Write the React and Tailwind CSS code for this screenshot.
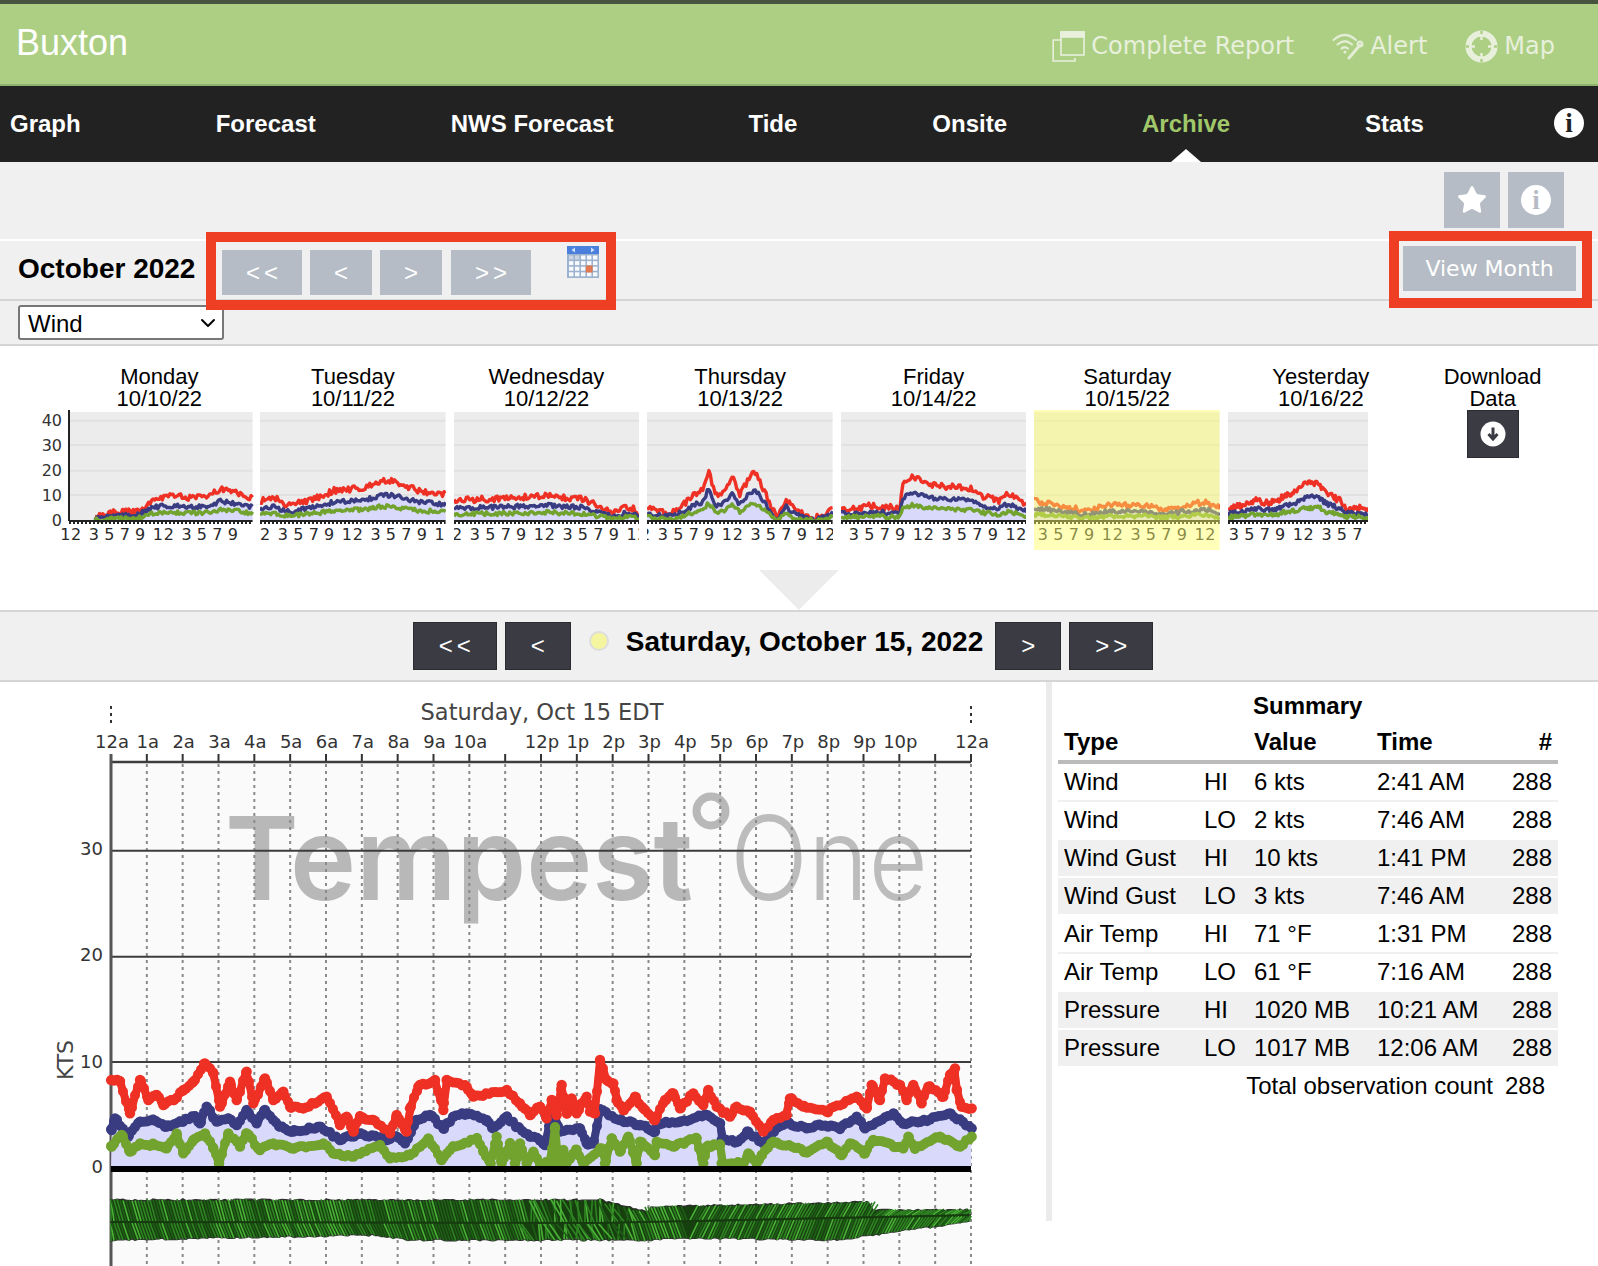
import { ChevronDown, Star } from 'lucide-react';

const NAV = ['Graph', 'Forecast', 'NWS Forecast', 'Tide', 'Onsite', 'Archive', 'Stats'];
const DEJAVU = 'DejaVu Sans, sans-serif';
const COL_WIDTH = 185.6;

const DAYS = [
  { name: 'Monday', date: '10/10/22', offset: 4, left: 2, axis: true, red: [[0.14, 1.7], [0.26, 3.5], [0.38, 4], [0.46, 9], [0.6, 10], [0.68, 9], [0.77, 10], [0.82, 12.5], [0.93, 11], [1, 8.7]] },
  { name: 'Tuesday', date: '10/11/22', offset: 0, red: [[0, 8], [0.08, 9], [0.15, 6], [0.3, 9], [0.4, 12], [0.55, 13], [0.65, 16], [0.72, 16], [0.85, 12], [1, 10.5]] },
  { name: 'Wednesday', date: '10/12/22', offset: -2, red: [[0, 8], [0.1, 8.5], [0.3, 9], [0.5, 10], [0.7, 8.5], [0.8, 5], [0.85, 3], [0.92, 5], [0.97, 5], [1, 1]] },
  { name: 'Thursday', date: '10/13/22', offset: -7, red: [[0, 5], [0.1, 3.5], [0.15, 3.5], [0.25, 10], [0.3, 12], [0.33, 20], [0.37, 10], [0.42, 12], [0.46, 18], [0.5, 10], [0.55, 17], [0.58, 20], [0.63, 12], [0.7, 1], [0.75, 9], [0.8, 4], [0.9, 1], [0.97, 3], [1, 5]] },
  { name: 'Friday', date: '10/14/22', offset: -10, red: [[0, 5], [0.1, 5], [0.15, 6], [0.32, 5], [0.33, 14], [0.38, 18], [0.5, 14], [0.7, 13], [0.75, 10], [0.85, 8], [0.9, 11], [1, 6]] },
  { name: 'Saturday', date: '10/15/22', offset: -14, highlight: true, red: [[0, 8], [0.1, 7], [0.2, 5], [0.3, 4], [0.4, 6.5], [0.5, 6], [0.6, 6], [0.7, 4], [0.8, 6], [0.92, 7.5], [1, 5]] },
  { name: 'Yesterday', date: '10/16/22', offset: -17, width: 140, red: [[0, 5], [0.1, 6], [0.2, 8], [0.3, 7], [0.35, 8], [0.4, 10], [0.5, 12], [0.55, 15], [0.65, 15], [0.7, 11], [0.8, 8], [0.85, 5], [1, 5]] },
];

const HOURS = ['12a', '1a', '2a', '3a', '4a', '5a', '6a', '7a', '8a', '9a', '10a', '', '12p', '1p', '2p', '3p', '4p', '5p', '6p', '7p', '8p', '9p', '10p', '', '12a'];

const SUMMARY = [
  ['Wind', 'HI', '6 kts', '2:41 AM'],
  ['Wind', 'LO', '2 kts', '7:46 AM'],
  ['Wind Gust', 'HI', '10 kts', '1:41 PM'],
  ['Wind Gust', 'LO', '3 kts', '7:46 AM'],
  ['Air Temp', 'HI', '71 °F', '1:31 PM'],
  ['Air Temp', 'LO', '61 °F', '7:16 AM'],
  ['Pressure', 'HI', '1020 MB', '10:21 AM'],
  ['Pressure', 'LO', '1017 MB', '12:06 AM'],
];

// key points read off the big chart, as [x, y] inside two crops of it
const RED = [
  [[215, 240], [240, 245], [270, 340], [300, 240], [325, 300], [350, 285], [370, 315], [400, 300], [430, 270], [460, 245], [495, 190], [520, 220], [540, 320], [570, 245], [590, 300], [620, 215], [640, 310], [675, 235], [700, 300], [730, 275], [750, 320], [790, 325], [860, 290], [900, 375], [920, 350], [940, 395], [960, 350], [1000, 360], [1050, 400], [1070, 345], [1100, 395], [1110, 325], [1135, 260], [1185, 240], [1210, 330], [1220, 240], [1280, 260], [1300, 290], [1400, 270], [1440, 310], [1470, 345]],
  [[0, 320], [20, 355], [35, 300], [50, 345], [65, 255], [80, 340], [95, 295], [110, 340], [140, 290], [150, 335], [165, 340], [180, 180], [200, 240], [220, 250], [230, 300], [250, 330], [285, 290], [310, 325], [345, 360], [375, 300], [400, 280], [420, 325], [460, 280], [490, 315], [505, 270], [530, 320], [570, 350], [590, 320], [630, 335], [670, 395], [700, 360], [740, 345], [750, 295], [790, 320], [860, 335], [950, 290], [980, 325], [995, 255], [1020, 300], [1035, 235], [1080, 255], [1100, 300], [1120, 255], [1145, 310], [1165, 260], [1210, 290], [1230, 225], [1245, 205], [1250, 270], [1265, 320], [1295, 325]],
];
const BLUE = [
  [[215, 390], [225, 355], [265, 410], [300, 365], [340, 360], [380, 380], [420, 365], [465, 350], [480, 370], [500, 320], [530, 365], [565, 355], [590, 375], [620, 330], [650, 370], [675, 330], [720, 380], [760, 395], [840, 380], [900, 420], [960, 400], [1040, 420], [1070, 410], [1095, 430], [1130, 360], [1170, 345], [1210, 385], [1240, 350], [1280, 340], [1340, 360], [1360, 385], [1400, 350], [1430, 380], [1470, 410]],
  [[0, 420], [15, 435], [30, 360], [45, 350], [60, 395], [120, 385], [140, 430], [160, 430], [180, 330], [240, 360], [300, 375], [345, 395], [350, 370], [420, 365], [500, 345], [540, 370], [545, 420], [590, 425], [625, 395], [670, 430], [700, 395], [740, 370], [800, 385], [840, 375], [900, 385], [950, 350], [975, 385], [1060, 340], [1090, 370], [1140, 365], [1230, 340], [1295, 385]],
];
const GREEN = [
  [[215, 440], [245, 405], [270, 455], [300, 430], [340, 435], [380, 445], [410, 400], [430, 460], [460, 420], [495, 400], [520, 445], [537, 490], [565, 400], [600, 440], [620, 400], [660, 450], [700, 430], [760, 445], [850, 430], [880, 460], [940, 470], [1020, 435], [1050, 475], [1110, 465], [1165, 415], [1205, 480], [1240, 440], [1310, 415], [1330, 455], [1352, 490], [1370, 410], [1385, 490], [1410, 430], [1425, 490], [1440, 430], [1460, 490], [1480, 455]],
  [[0, 490], [30, 490], [45, 385], [55, 490], [70, 450], [75, 490], [110, 450], [130, 490], [185, 445], [195, 490], [215, 415], [240, 455], [265, 410], [290, 490], [300, 425], [345, 465], [350, 425], [400, 440], [470, 415], [490, 490], [500, 440], [540, 435], [545, 490], [610, 490], [625, 460], [650, 490], [665, 465], [700, 425], [800, 455], [860, 425], [905, 465], [930, 430], [975, 460], [1000, 420], [1090, 445], [1105, 410], [1125, 445], [1200, 410], [1260, 440], [1295, 410]],
];

function toPage([first, second]) {
  return [
    ...first.map(([x, y]) => [40 + x / 3, 1000 + y / 3]),
    ...second.map(([x, y]) => [540 + x / 3, 1000 + y / 3]),
  ];
}

function wobble(i, seed) {
  const v = Math.sin(i * 12.9898 + seed * 78.233) * 43758.5453;
  return v - Math.floor(v) - 0.5;
}

function lerpAt(points, x) {
  if (x <= points[0][0]) return points[0][1];
  for (let i = 1; i < points.length; i++) {
    if (x <= points[i][0]) {
      const [x0, y0] = points[i - 1];
      const [x1, y1] = points[i];
      return y0 + ((y1 - y0) * (x - x0)) / (x1 - x0 || 1);
    }
  }
  return points[points.length - 1][1];
}

function toLine(points) {
  return points.map(([x, y]) => `${x.toFixed(1)},${y.toFixed(1)}`).join(' ');
}

function Button({ children, className }) {
  return (
    <button type="button" className={`flex items-center justify-center text-white ${className}`}>
      {children}
    </button>
  );
}

function InfoDot({ color, className = '' }) {
  return (
    <span className={`flex h-[30px] w-[30px] items-center justify-center rounded-full bg-white ${className}`}>
      <span className={`font-['Liberation_Serif',serif] text-[27px] leading-none font-bold ${color}`}>i</span>
    </span>
  );
}

function ReportIcon() {
  return (
    <svg width="33" height="31" viewBox="0 0 33 31" fill="none" stroke="#e8f0dc" strokeWidth="1.6">
      <rect x="9" y="1" width="23" height="23" />
      <rect x="9" y="1" width="23" height="5" fill="#e8f0dc" />
      <path d="M9 9H1.2V30H23V27" />
    </svg>
  );
}

function AlertIcon() {
  return (
    <svg width="32" height="28" viewBox="0 0 32 28" fill="none" stroke="#e3ecd4" strokeWidth="2.2" strokeLinecap="round">
      <path d="M1.5 8Q13 -2 24 8" />
      <path d="M5.5 12.5Q13 6 20 12.5" />
      <path d="M9.5 16.5Q13 14 16 16.5" />
      <circle cx="13" cy="20" r="1.6" fill="#e3ecd4" stroke="none" />
      <path d="M28 13L17 26" strokeWidth="3" />
      <circle cx="28" cy="12" r="2.4" />
    </svg>
  );
}

function MapIcon() {
  return (
    <svg width="33" height="33" viewBox="0 0 33 33" fill="none" stroke="#e8f0dc">
      <circle cx="16.5" cy="16.5" r="13" strokeWidth="6" />
      <path d="M16.5 1V4M16.5 29V32M1 16.5H4M29 16.5H32" stroke="#accf84" strokeWidth="2.4" />
      <path d="M16.5 6V10M16.5 23V27M6 16.5H10M23 16.5H27" strokeWidth="2.4" />
    </svg>
  );
}

function CalendarIcon() {
  const cells = [];
  for (let row = 0; row < 4; row++) {
    for (let col = 0; col < 5; col++) {
      cells.push(
        <rect
          key={`${row}-${col}`}
          x={2 + col * 6}
          y={9.5 + row * 5.6}
          width="4.4"
          height="4"
          fill={row === 0 && col < 2 ? '#c9d3e2' : '#f7f9fc'}
        />,
      );
    }
  }
  return (
    <svg width="32" height="32" viewBox="0 0 32 32" className="mt-[5px] ml-[36px]">
      <rect width="32" height="32" fill="#9cb2cf" />
      <rect width="32" height="8" fill="#4a7fdc" />
      <path d="M8 1.5V6.5L4.5 4ZM24 1.5V6.5L27.5 4Z" fill="#cfe0f7" />
      {cells}
      <rect x="18.8" y="19.5" width="6.8" height="7" fill="#e2784f" />
    </svg>
  );
}

function MiniChart({ day }) {
  const width = day.width ?? COL_WIDTH;
  const left = day.left ?? 0;
  const baseY = 111;
  const toY = (v) => baseY - v * 2.53;
  const start = day.red[0][0];
  const red = [];
  const blue = [];
  const green = [];
  const seed = day.date.charCodeAt(4);
  for (let i = 0; i <= 120; i++) {
    const f = i / 120;
    if (f < start) continue;
    const x = left + f * (width - left);
    const v = lerpAt(day.red, f);
    red.push([x, toY(Math.max(0, v + wobble(i, seed) * 2.4))]);
    blue.push([x, toY(Math.max(0, v * 0.64 - 0.2 + wobble(i, seed + 1) * 1.8))]);
    green.push([x, toY(Math.max(0, v * 0.37 - 0.3 + wobble(i, seed + 2) * 1.6))]);
  }
  const area = `${blue[0][0]},${baseY} ${toLine(blue)} ${width},${baseY}`;
  const labels = [0, 3, 5, 7, 9, 12, 15, 17, 19, 21, 24];
  return (
    <svg width={width} height="140" viewBox={`0 0 ${width} 140`} className={day.axis ? 'overflow-visible' : 'overflow-hidden'}>
      <rect x={left} y="2" width={width - left} height={baseY - 2} fill="#ececec" />
      {[10.7, 35, 60.7, 85].map((y) => (
        <line key={y} x1={left} x2={width} y1={y} y2={y} stroke="#e1e1e1" strokeWidth="2" />
      ))}
      <polygon points={area} fill="#d9d9fb" />
      <polyline points={toLine(red)} fill="none" stroke="#ee3124" strokeWidth="3.4" strokeLinejoin="round" />
      <polyline points={toLine(blue)} fill="none" stroke="#3a3c82" strokeWidth="3.4" strokeLinejoin="round" />
      <polyline points={toLine(green)} fill="none" stroke="#72a32e" strokeWidth="3.4" strokeLinejoin="round" />
      <line x1={left} x2={width} y1={baseY} y2={baseY} stroke="#222" strokeWidth="2" />
      <line x1={left} x2={width} y1={baseY + 2} y2={baseY + 2} stroke="#222" strokeWidth="2" strokeDasharray="2 2" />
      {labels.map((hour) => {
        const x = hour * 7.72 + day.offset;
        if (day.axis && x > width) return null;
        return (
          <text key={hour} x={x} y="130" textAnchor="middle" fontFamily={DEJAVU} fontSize="16" letterSpacing="0.6" fill="#2a2a2a">
            {hour % 12 === 0 ? '12' : hour % 12}
          </text>
        );
      })}
      {day.axis && (
        <g fontFamily={DEJAVU} fontSize="16" fill="#333" textAnchor="end">
          <line x1="2" x2="2" y1="0" y2={baseY} stroke="#222" strokeWidth="2" />
          {[[40, 16], [30, 41], [20, 66], [10, 91], [0, 116]].map(([v, y]) => (
            <text key={v} x="-5" y={y}>{v}</text>
          ))}
        </g>
      )}
      {day.highlight && <rect width={width} height="140" fill="#ffff66" fillOpacity="0.45" />}
    </svg>
  );
}

function DayColumn({ day }) {
  return (
    <div className="flex w-[185.6px] shrink-0 flex-col">
      <div className="text-center text-[22px] leading-[22px] text-black">
        <div>{day.name}</div>
        <div>{day.date}</div>
      </div>
      <MiniChart day={day} />
    </div>
  );
}

function DownloadColumn() {
  return (
    <div className="flex w-[142px] shrink-0 flex-col items-center text-center text-[22px] leading-[22px] text-black">
      <div>Download</div>
      <div>Data</div>
      <Button className="h-[48px] w-[52px] border border-[#2b2c32] bg-[#3a3b43]">
        <svg width="26" height="26" viewBox="0 0 26 26">
          <circle cx="13" cy="13" r="12.5" fill="#fff" />
          <path d="M13 6.5V17M8.5 13L13 18L17.5 13" fill="none" stroke="#3a3b43" strokeWidth="3" />
        </svg>
      </Button>
    </div>
  );
}

function Beads({ points, color, seed }) {
  const dots = [];
  for (let x = 111; x <= 971; x += 3) {
    dots.push([x, lerpAt(points, x) + wobble(x, seed) * 3]);
  }
  return (
    <g fill={color}>
      <polyline points={toLine(points)} fill="none" stroke={color} strokeWidth="7" strokeLinejoin="round" />
      <polyline points={toLine(dots)} fill="none" stroke={color} strokeWidth="8" strokeLinejoin="round" />
      {dots.map(([x, y]) => (
        <circle key={x} cx={x} cy={y} r="5" />
      ))}
      {points.map(([x, y]) => (
        <circle key={`${x}-${y}`} cx={x} cy={y} r="5.2" />
      ))}
    </g>
  );
}

function WindBarbs() {
  const top = [[111, 1200], [600, 1200], [648, 1212], [650, 1207], [868, 1202], [873, 1210], [971, 1210]];
  const bottom = [[111, 1240], [373, 1235], [407, 1240], [656, 1240], [673, 1238], [840, 1240], [907, 1230], [971, 1222]];
  const mid = [[111, 1222], [600, 1223], [971, 1215]];
  const strokes = [];
  const edge = [];
  for (let x = 111; x <= 971; x += 3) {
    const m = lerpAt(mid, x);
    const pick = wobble(x, 9);
    const color = pick > 0.3 ? '#4ab236' : pick > -0.15 ? '#2f8423' : '#1f5f17';
    const chaos = x > 530 && x < 640 ? wobble(x, 5) * 16 : 0;
    const slant = x < 690 ? -6 : 8;
    const t = lerpAt(top, x) + wobble(x, 3) * 2;
    const b = lerpAt(bottom, x) + wobble(x, 4) * 2;
    edge.push([x, t], [x, b]);
    strokes.push(
      <line key={`t${x}`} x1={Math.min(971, Math.max(111, x + slant + chaos))} y1={t} x2={x} y2={m - 1} stroke={color} strokeWidth="1.6" />,
      <line key={`b${x}`} x1={Math.min(971, Math.max(111, x + slant - chaos))} y1={m + 1} x2={x} y2={b} stroke={color} strokeWidth="1.6" />,
    );
  }
  const outline = [...edge.filter((_, i) => i % 2 === 0), ...edge.filter((_, i) => i % 2 === 1).reverse()];
  return (
    <g>
      <polygon points={toLine(outline)} fill="#17400f" stroke="#2c2c2c" strokeWidth="1.2" />
      {strokes}
      <polyline points={toLine(mid)} fill="none" stroke="#173a10" strokeWidth="1.5" />
    </g>
  );
}

function MainChart() {
  const step = 860 / 24;
  const baseY = 1169;
  const red = toPage(RED);
  const blue = toPage(BLUE);
  const green = toPage(GREEN);
  return (
    <svg width="1046" height="584" viewBox="0 682 1046 584" className="shrink-0">
      <rect x="111" y="762" width="860" height="504" fill="#fafafa" />
      <text x="225" y="900" fontFamily="Inter, sans-serif" fontWeight="600" fontSize="116" fill="#b8b8b8" textLength="468" lengthAdjust="spacingAndGlyphs">
        Tempest
      </text>
      <circle cx="711" cy="811" r="14.5" fill="none" stroke="#b8b8b8" strokeWidth="8" />
      <text x="730" y="900" fontFamily="Inter, sans-serif" fontWeight="300" fontSize="116" fill="#bcbcbc" textLength="198" lengthAdjust="spacingAndGlyphs">
        One
      </text>

      {HOURS.map((label, i) => (
        <g key={i}>
          <line x1={111 + i * step} x2={111 + i * step} y1="754" y2="762" stroke="#333" strokeWidth="2" />
          {i > 0 && (
            <line x1={111 + i * step} x2={111 + i * step} y1="764" y2="1266" stroke="#8a8a8a" strokeWidth="2" strokeDasharray="3 4" />
          )}
          <text x={112 + i * step} y="748" textAnchor="middle" fontFamily={DEJAVU} fontSize="18" fill="#333">
            {label}
          </text>
        </g>
      ))}
      <line x1="111" x2="111" y1="706" y2="726" stroke="#333" strokeWidth="2" strokeDasharray="3 4" />
      <line x1="971" x2="971" y1="706" y2="726" stroke="#333" strokeWidth="2" strokeDasharray="3 4" />
      <text x="542" y="720" textAnchor="middle" fontFamily={DEJAVU} fontSize="22.5" fill="#444">
        Saturday, Oct 15 EDT
      </text>

      <line x1="111" x2="971" y1="762" y2="762" stroke="#3c3c3c" strokeWidth="2.5" />
      {[850.7, 956.7, 1062].map((y) => (
        <line key={y} x1="111" x2="971" y1={y} y2={y} stroke="#3c3c3c" strokeWidth="2" />
      ))}
      <line x1="111" x2="111" y1="754" y2="1266" stroke="#555" strokeWidth="3" />
      {[[30, 855], [20, 961], [10, 1068], [0, 1173]].map(([v, y]) => (
        <text key={v} x="103" y={y} textAnchor="end" fontFamily={DEJAVU} fontSize="18" fill="#333">{v}</text>
      ))}
      <text x="73" y="1060" textAnchor="middle" transform="rotate(-90 73 1060)" fontFamily={DEJAVU} fontSize="22" fill="#444">
        KTS
      </text>

      <polygon points={`111,${baseY} ${toLine(blue)} 971,${baseY}`} fill="#d9d9fb" />
      <Beads points={blue} color="#3a3c82" seed={2} />
      <Beads points={green} color="#72a32e" seed={3} />
      <Beads points={red} color="#ee3124" seed={1} />
      <rect x="111" y="1166" width="860" height="6" fill="#000" />
      <WindBarbs />
    </svg>
  );
}

function SummaryTable() {
  return (
    <div className="ml-[6px] w-[500px] shrink-0 pt-[6px] text-[24px] text-black">
      <div className="flex h-[36px] items-center pl-[195px] leading-none font-bold">Summary</div>
      <div className="flex h-[40px] items-center border-b-4 border-[#bbbbbb] px-[6px] font-bold">
        <span className="w-[190px]">Type</span>
        <span className="w-[123px]">Value</span>
        <span>Time</span>
        <span className="ml-auto">#</span>
      </div>
      {SUMMARY.map((row, i) => (
        <div
          key={`${row[0]}${row[1]}`}
          className={`flex h-[38px] items-center border-b-2 px-[6px] ${i === 2 || i === 3 || i === 6 || i === 7 ? 'bg-[#f0f0f0]' : ''} ${i === 0 || i === 4 ? 'border-[#f0f0f0]' : 'border-white'}`}
        >
          <span className="w-[140px]">{row[0]}</span>
          <span className="w-[50px]">{row[1]}</span>
          <span className="w-[123px]">{row[2]}</span>
          <span>{row[3]}</span>
          <span className="ml-auto">288</span>
        </div>
      ))}
      <div className="flex h-[36px] items-center justify-end pr-[13px]">
        <span>Total observation count</span>
        <span className="ml-[12px]">288</span>
      </div>
    </div>
  );
}

export default function App() {
  const light = 'bg-[#b5bcc5]';
  const dark = 'border border-[#2b2c32] bg-[#3a3b43]';
  const arrows = "pl-[4px] text-[24px] tracking-[4px]";

  return (
    <div className="relative h-[1266px] w-full overflow-hidden bg-white font-['Liberation_Sans',Arial,sans-serif]">
      <header className="flex h-[86px] items-center justify-between border-t-[4px] border-b-2 border-t-[#47543f] border-b-[#8fb36e] bg-[#accf84] pr-[43px] pl-[16px]">
        <h1 className="-mt-[2px] text-[36px] leading-none text-white">Buxton</h1>
        <div className="mt-[4px] flex items-center font-['DejaVu_Sans',sans-serif] text-[24px] text-[#e8f0dc]">
          <ReportIcon />
          <span className="ml-[6px]">Complete Report</span>
          <span className="ml-[38px] flex"><AlertIcon /></span>
          <span className="ml-[6px]">Alert</span>
          <span className="ml-[38px] flex"><MapIcon /></span>
          <span className="ml-[6px]">Map</span>
        </div>
      </header>

      <nav className="relative flex h-[76px] items-center gap-[135px] bg-[#222222] pr-[14px] pl-[10px] text-[24px] font-bold text-white">
        {NAV.map((item) => (
          <span key={item} className={item === 'Archive' ? 'text-[#a0c86a]' : ''}>{item}</span>
        ))}
        <InfoDot color="text-[#222222]" className="absolute top-[22px] right-[14px]" />
        <span className="absolute bottom-0 left-[1171px] h-0 w-0 border-x-[15px] border-b-[13px] border-x-transparent border-b-white" />
      </nav>

      <div className="flex h-[77px] justify-end gap-2 bg-[#f0f0f0] pt-[10px] pr-[34px]">
        <Button className={`h-[56px] w-[56px] ${light}`}>
          <Star size={32} fill="#fff" stroke="#fff" strokeWidth={1} />
        </Button>
        <Button className={`h-[56px] w-[56px] ${light}`}>
          <InfoDot color="text-[#b5bcc5]" />
        </Button>
      </div>

      <div className="flex h-[62px] border-t-2 border-b-2 border-t-white border-b-[#d5d5d5] bg-[#f0f0f0] pl-[18px]">
        <h2 className="w-[204px] pt-[8px] text-[28px] leading-[40px] font-bold text-black">October 2022</h2>
        <div className="flex gap-2 pt-[9px]">
          <Button className={`h-[45px] w-[80px] ${light} ${arrows}`}>&lt;&lt;</Button>
          <Button className={`h-[45px] w-[62px] ${light} ${arrows}`}>&lt;</Button>
          <Button className={`h-[45px] w-[62px] ${light} ${arrows}`}>&gt;</Button>
          <Button className={`ml-[1px] h-[45px] w-[80px] ${light} ${arrows}`}>&gt;&gt;</Button>
        </div>
        <CalendarIcon />
        <Button className={`mt-[5px] mr-[22px] ml-auto h-[45px] w-[173px] ${light} font-['DejaVu_Sans',sans-serif] text-[22px]`}>
          View Month
        </Button>
      </div>

      <div className="flex h-[45px] border-b-2 border-[#d5d5d5] bg-[#f0f0f0] pt-[4px] pl-[18px]">
        <div className="flex h-[35px] w-[206px] items-center justify-between rounded-[3px] border-2 border-[#777777] bg-white pr-[2px] pl-[8px] text-[24px] leading-none text-black">
          <span className="pt-[2px]">Wind</span>
          <ChevronDown size={24} strokeWidth={2} />
        </div>
      </div>

      <div className="flex h-[224px] gap-2 pt-[20px] pl-[66.5px]">
        {DAYS.map((day) => (
          <DayColumn key={day.date} day={day} />
        ))}
        <DownloadColumn />
      </div>

      <div className="mx-auto h-0 w-0 border-x-[40px] border-t-[40px] border-x-transparent border-t-[#ececec]" />

      <div className="flex h-[72px] items-center justify-center border-y-2 border-[#d5d5d5] bg-[#f0f0f0] pr-[32px]">
        <Button className={`h-[48px] w-[84px] ${dark} ${arrows}`}>&lt;&lt;</Button>
        <Button className={`ml-2 h-[48px] w-[66px] ${dark} ${arrows}`}>&lt;</Button>
        <span className="mb-[10px] ml-[18px] h-[20px] w-[20px] rounded-full border-2 border-[#dddddd] bg-[#f5f5a0]" />
        <span className="mr-[12px] mb-[8px] ml-[17px] text-[28px] font-bold text-black">Saturday, October 15, 2022</span>
        <Button className={`h-[48px] w-[66px] ${dark} ${arrows}`}>&gt;</Button>
        <Button className={`ml-2 h-[48px] w-[84px] ${dark} ${arrows}`}>&gt;&gt;</Button>
      </div>

      <div className="flex h-[584px] overflow-hidden">
        <MainChart />
        <div className="h-[539px] w-[6px] shrink-0 bg-[#ebebeb]" />
        <SummaryTable />
      </div>

      <div className="pointer-events-none absolute top-[232px] left-[206px] h-[78px] w-[410px] border-[10px] border-[#ee3e24]" />
      <div className="pointer-events-none absolute top-[231px] left-[1389px] h-[77px] w-[203px] border-[10px] border-[#ee3e24]" />
    </div>
  );
}
